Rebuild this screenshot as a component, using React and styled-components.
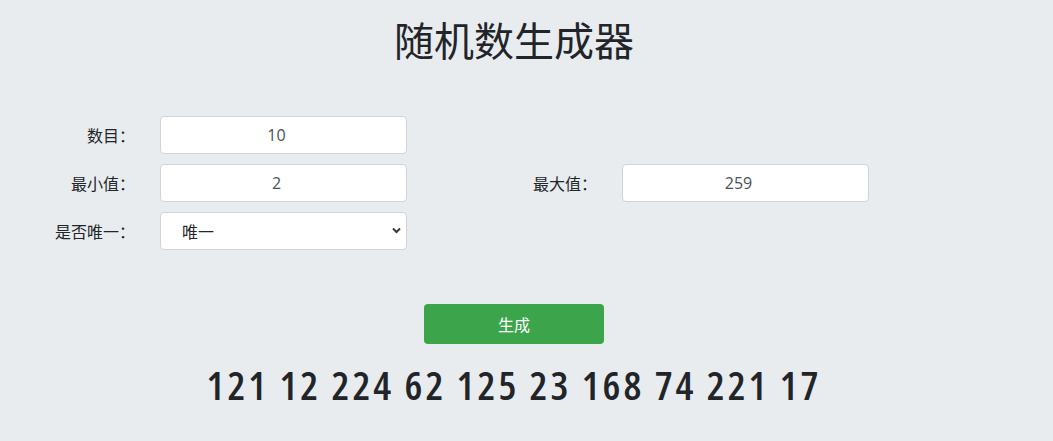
import React, { useState } from "react";
import styled, { createGlobalStyle } from "styled-components";

const Global = createGlobalStyle`
  html, body { margin: 0; padding: 0; background: #e9ecef; }
  body {
    font-family: "Noto Sans CJK SC", "Noto Sans", sans-serif;
    color: #212529;
    font-size: 16px;
  }
`;

const Page = styled.main`
  width: 1028px;
  display: flex;
  flex-direction: column;
  align-items: center;
  padding-top: 13px;
`;

const Title = styled.h1`
  margin: 0;
  font-size: 40px;
  font-weight: 400;
  line-height: 52px;
  color: #212529;
`;

const Form = styled.div`
  align-self: stretch;
  display: grid;
  grid-template-columns: 160px 247px 215px 247px;
  grid-auto-rows: 38px;
  row-gap: 10px;
  margin-top: 51px;
`;

const Label = styled.label`
  display: flex;
  align-items: center;
  justify-content: flex-end;
  padding-right: 25px;
  font-size: 16px;
  color: #212529;
  white-space: nowrap;
`;

const Input = styled.input`
  box-sizing: border-box;
  width: 100%;
  height: 38px;
  border: 1px solid #ced4da;
  border-radius: 4px;
  background: #fff;
  text-align: center;
  padding: 0 14px 0 0;
  font-family: "Open Sans", "Noto Sans CJK SC", sans-serif;
  font-size: 16px;
  color: #495057;
  outline: none;
`;

const SelectWrap = styled.div`
  position: relative;
`;

const Select = styled.select`
  box-sizing: border-box;
  width: 100%;
  height: 38px;
  border: 1px solid #ced4da;
  border-radius: 4px;
  background: #fff;
  appearance: none;
  padding-left: 21px;
  font-family: "Noto Sans CJK SC", sans-serif;
  font-size: 16px;
  color: #212529;
  outline: none;
`;

const Chevron = styled.svg`
  position: absolute;
  right: 6px;
  top: 15px;
  pointer-events: none;
`;

const Spacer = styled.div``;

const Button = styled.button`
  margin-top: 54px;
  width: 180px;
  height: 40px;
  border: none;
  border-radius: 4px;
  background: #3ca44a;
  color: #fff;
  font-family: "Noto Sans CJK SC", sans-serif;
  font-size: 16px;
  cursor: pointer;
`;

const Result = styled.div`
  margin-top: 17px;
  font-family: "Open Sans", "Noto Sans", sans-serif;
  font-size: 40px;
  font-weight: 600;
  font-stretch: 80%;
  line-height: 48px;
  color: #212529;
  letter-spacing: 3px;
`;

export default function App() {
  const [count] = useState("10");
  const [min] = useState("2");
  const [max] = useState("259");
  const nums = [121, 12, 224, 62, 125, 23, 168, 74, 221, 17];
  return (
    <>
      <Global />
      <Page>
        <Title>随机数生成器</Title>
        <Form>
          <Label>数目：</Label>
          <Input defaultValue={count} />
          <Spacer />
          <Spacer />
          <Label>最小值：</Label>
          <Input defaultValue={min} />
          <Label>最大值：</Label>
          <Input defaultValue={max} />
          <Label>是否唯一：</Label>
          <SelectWrap>
            <Select defaultValue="unique">
              <option value="unique">唯一</option>
              <option value="repeat">可重复</option>
            </Select>
            <Chevron width="9" height="7" viewBox="0 0 9 7">
              <path d="M1 1.5 L4.5 5 L8 1.5" fill="none" stroke="#343a40" strokeWidth="2" />
            </Chevron>
          </SelectWrap>
        </Form>
        <Button>生成</Button>
        <Result>{nums.join(" ")}</Result>
      </Page>
    </>
  );
}
